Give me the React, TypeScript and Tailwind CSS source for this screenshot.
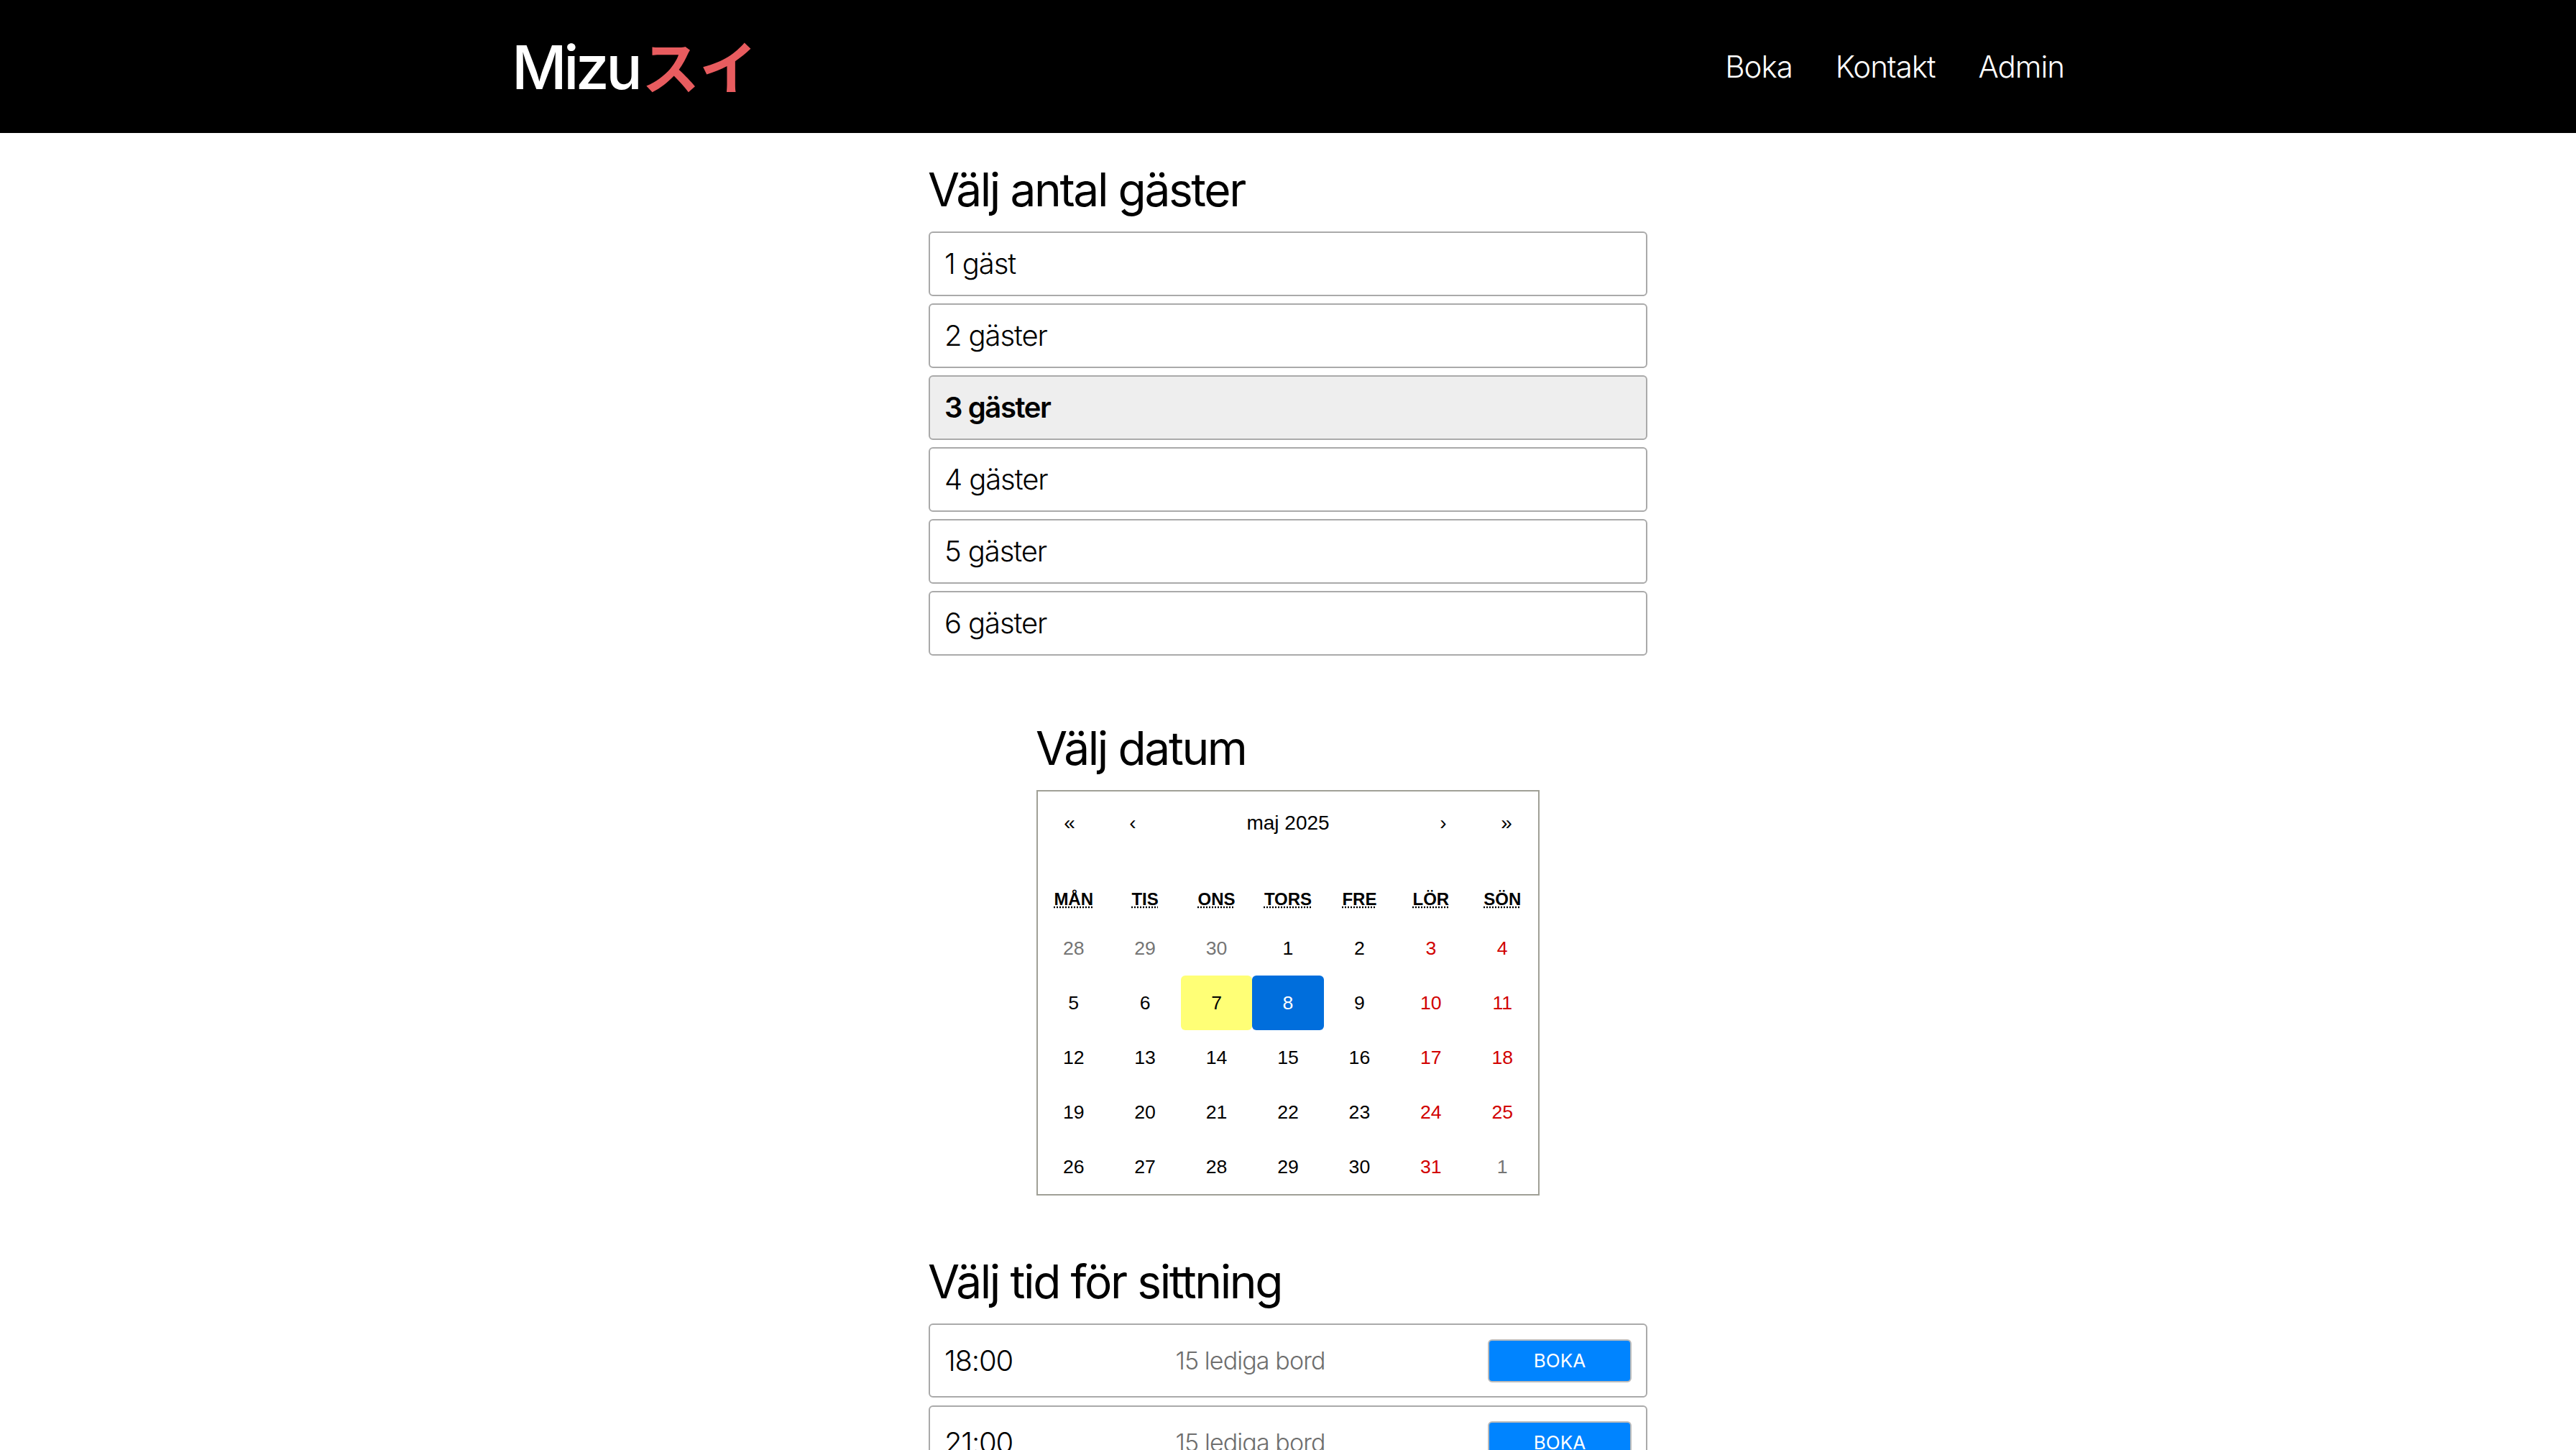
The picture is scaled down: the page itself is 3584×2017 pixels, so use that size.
import React from "react";

const guests = ["1 gäst", "2 gäster", "3 gäster", "4 gäster", "5 gäster", "6 gäster"];
const weekdays = ["MÅN", "TIS", "ONS", "TORS", "FRE", "LÖR", "SÖN"];
const days: [string, string][] = [
  ["28", "o"], ["29", "o"], ["30", "o"], ["1", ""], ["2", ""], ["3", "w"], ["4", "w"],
  ["5", ""], ["6", ""], ["7", "now"], ["8", "act"], ["9", ""], ["10", "w"], ["11", "w"],
  ["12", ""], ["13", ""], ["14", ""], ["15", ""], ["16", ""], ["17", "w"], ["18", "w"],
  ["19", ""], ["20", ""], ["21", ""], ["22", ""], ["23", ""], ["24", "w"], ["25", "w"],
  ["26", ""], ["27", ""], ["28", ""], ["29", ""], ["30", ""], ["31", "w"], ["1", "o"],
];

function tileClass(k: string) {
  if (k === "o") return "text-[#757575]";
  if (k === "w") return "text-[#d10000]";
  if (k === "now") return "bg-[#ffff76] text-black rounded-[6px]";
  if (k === "act") return "bg-[#006edc] text-white rounded-[6px]";
  return "text-black";
}

function Heading({ children }: { children: React.ReactNode }) {
  return <h2 className="text-[64px] leading-[76px] tracking-[-2.4px] -ml-[1px] font-normal text-black mb-[20px]">{children}</h2>;
}

function Seat({ time }: { time: string }) {
  return (
    <div className="h-[103px] flex items-center justify-between border-2 border-[#aaaaaa] rounded-[6px] px-[20px] mb-[11px] bg-white">
      <span className="text-[40px] font-light tracking-[-1.2px] text-black">{time}</span>
      <span className="text-[34px] font-light tracking-[-0.9px] text-[#6e6e6e]">15 lediga bord</span>
      <button className="w-[200px] h-[60px] bg-[#0084ff] border-2 border-[#bbbbbb] rounded-[6px] text-white text-[26px] font-normal">BOKA</button>
    </div>
  );
}

export default function App() {
  return (
    <div className="h-[2017px] overflow-hidden bg-white font-['Inter','Noto_Sans_CJK_JP',sans-serif]">
      <header className="h-[185px] bg-black">
        <div className="w-[2160px] h-full mx-auto flex items-center justify-between">
          <div className="text-[84px] font-medium text-white leading-none tracking-[-4.5px]">
            Mizu<span className="text-[#e85c5f] font-['Noto_Sans_CJK_JP',sans-serif] font-bold tracking-normal text-[80px] ml-[4px]">スイ</span>
          </div>
          <nav className="flex gap-[60px] text-[42px] font-light tracking-[-1px] text-white">
            <a>Boka</a>
            <a>Kontakt</a>
            <a>Admin</a>
          </nav>
        </div>
      </header>
      <main className="w-[1000px] mx-auto pt-[41px]">
        <Heading>Välj antal gäster</Heading>
        <div className="flex flex-col gap-[10px]">
          {guests.map((g, i) => (
            <div
              key={g}
              className={`h-[90px] flex items-center px-[20px] border-2 border-[#aaaaaa] rounded-[6px] text-[40px] text-black ${i === 2 ? "bg-[#eeeeee] font-semibold tracking-[-1.4px]" : "bg-white font-light tracking-[-1.1px]"}`}
            >
              {g}
            </div>
          ))}
        </div>
        <div className="w-[700px] mx-auto mt-[91px]">
          <Heading>Välj datum</Heading>
          <div className="border-2 border-[#a0a096] bg-white font-['Liberation_Sans',Arial,sans-serif]">
            <div className="h-[88px] mb-[32px] flex items-center text-black text-center">
              <span className="w-[88px] text-[28px]">«</span>
              <span className="w-[88px] text-[28px]">‹</span>
              <span className="flex-1 text-[28px]">maj 2025</span>
              <span className="w-[88px] text-[28px]">›</span>
              <span className="w-[88px] text-[28px]">»</span>
            </div>
            <div className="grid grid-cols-7 text-center text-[24px] font-bold leading-[36px] py-[12px] text-black">
              {weekdays.map((d) => (
                <div key={d}>
                  <abbr className="underline decoration-dotted">{d}</abbr>
                </div>
              ))}
            </div>
            <div className="grid grid-cols-7 text-center text-[26.67px] leading-[36px]">
              {days.map(([d, k], i) => (
                <div key={i} className={`h-[76px] flex items-center justify-center ${tileClass(k)}`}>{d}</div>
              ))}
            </div>
          </div>
        </div>
        <div className="mt-[82px]">
          <Heading>Välj tid för sittning</Heading>
          <Seat time="18:00" />
          <Seat time="21:00" />
        </div>
      </main>
    </div>
  );
}
